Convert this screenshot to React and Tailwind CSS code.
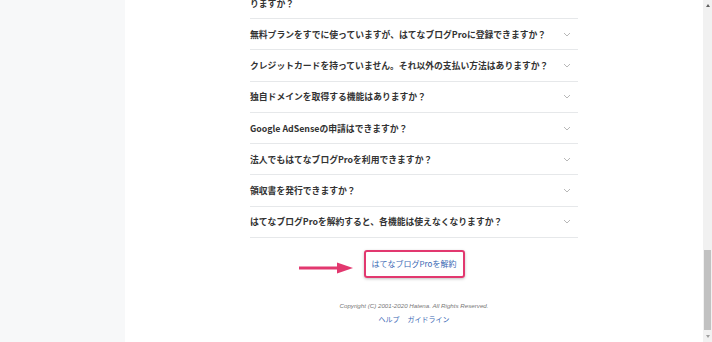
import { ChevronDown } from 'lucide-react'

const faqs = [
  '無料プランをすでに使っていますが、はてなブログProに登録できますか？',
  'クレジットカードを持っていません。それ以外の支払い方法はありますか？',
  '独自ドメインを取得する機能はありますか？',
  'Google AdSenseの申請はできますか？',
  '法人でもはてなブログProを利用できますか？',
  '領収書を発行できますか？',
  'はてなブログProを解約すると、各機能は使えなくなりますか？',
]

const jp = "font-['Noto_Sans_CJK_JP','Noto_Sans',sans-serif]"

function Chevron() {
  return (
    <svg width="8" height="5" viewBox="0 0 8 5" className="shrink-0">
      <path d="M1 1 L4 4 L7 1" fill="none" stroke="#b0b0b0" strokeWidth="0.9" />
    </svg>
  )
}

function Arrow() {
  return (
    <svg width="54" height="12" viewBox="0 0 54 12" className="absolute left-[-65px] top-[12px]">
      <rect x="0" y="4.5" width="40" height="3" fill="#e2386f" />
      <path d="M38 0.5 L54 6 L38 11.5 Z" fill="#e2386f" />
    </svg>
  )
}

export default function App() {
  return (
    <div className={`flex h-[342px] w-[712px] overflow-hidden bg-white ${jp}`}>
      <aside className="w-[125px] shrink-0 bg-[#f7f8f9]" />

      <main className="flex flex-1 flex-col items-center overflow-hidden">
        <ul className="-mt-[30px] w-[328px] text-[8.8px] font-bold leading-[15px] text-[#333]">
          <li className="flex items-center justify-between border-b border-[#e6e8ea] pt-[8px] pb-[6px]">
            <span className="leading-[17px]">はてなブログProの料金は、月額と年額とで支払い方法に違いはあ<br />りますか？</span>
            <span className="-mt-[15px] pr-[7px]"><Chevron /></span>
          </li>
          {faqs.map((q) => (
            <li
              key={q}
              className="flex h-[31.3px] items-center justify-between border-b border-[#e6e8ea] pr-[7px]"
            >
              <span>{q}</span>
              <Chevron />
            </li>
          ))}
        </ul>

        <div className="relative mt-[12px]">
          <Arrow />
          <a className="flex h-[28px] w-[101px] items-center justify-center rounded-[3px] border-2 border-[#e2386f] text-[8px] text-[#3a68b4] shadow-[0_1px_3px_rgba(0,0,0,0.25)]">
            はてなブログProを解約
          </a>
        </div>

        <p className="mt-[23px] font-['Liberation_Sans',sans-serif] text-[6.2px] italic leading-[9px] text-[#777]">
          Copyright (C) 2001-2020 Hatena. All Rights Reserved.
        </p>
        <div className="mt-[4px] flex gap-[8px] text-[7px] leading-[10px] text-[#3a68b4]">
          <a>ヘルプ</a>
          <a>ガイドライン</a>
        </div>
      </main>

      <div className="flex w-[9px] shrink-0 flex-col items-center bg-[#f1f1f1]">
        <div className="mt-[4px] h-0 w-0 border-x-[2.5px] border-b-[3px] border-x-transparent border-b-[#606060]" />
        <div className="mt-[243px] h-[80px] w-[7px] bg-[#c1c1c1]" />
        <div className="mt-[5px] h-0 w-0 border-x-[2.5px] border-t-[3px] border-x-transparent border-t-[#a0a0a0]" />
      </div>
    </div>
  )
}
